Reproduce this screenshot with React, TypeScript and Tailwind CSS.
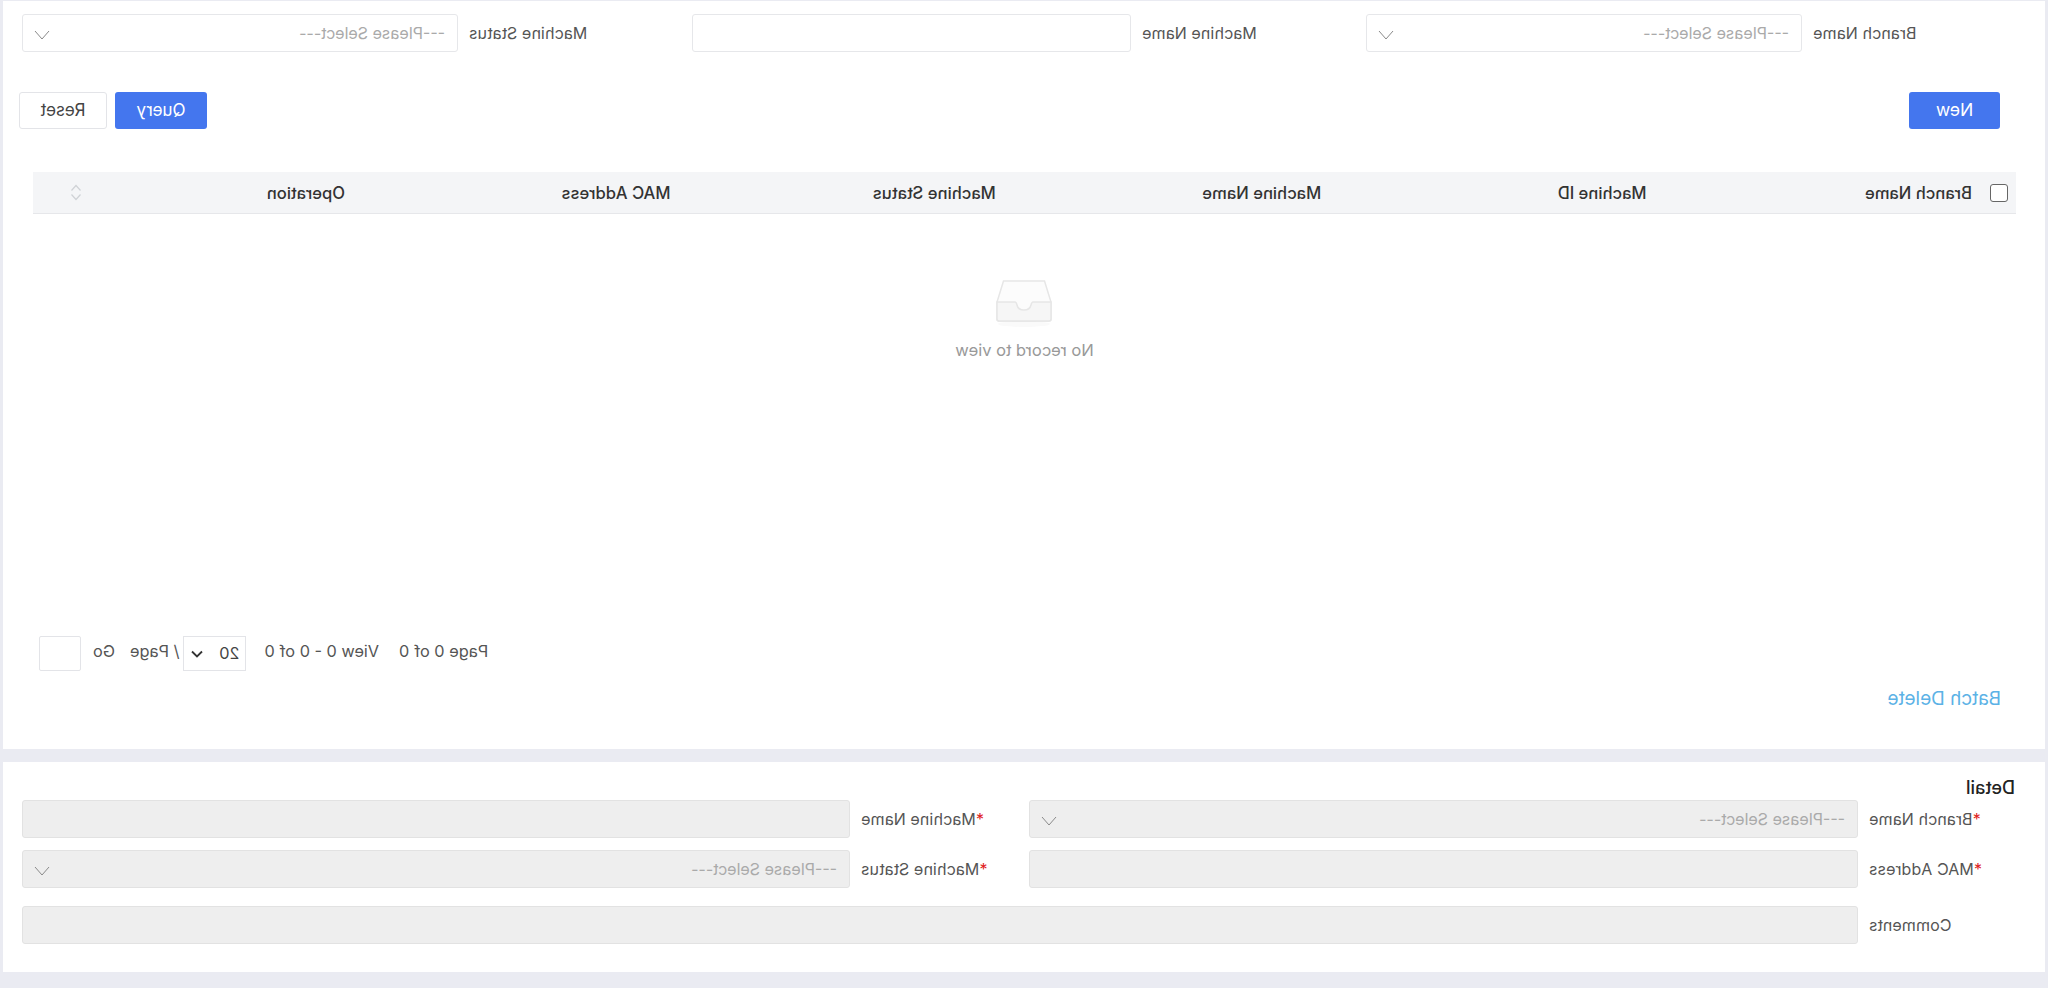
import type { ReactNode } from "react"

function Chevron() {
    return (
        <svg width="16" height="10" viewBox="0 0 16 10" fill="none" className="shrink-0 mt-[3px]">
            <path d="M1 1l7 8 7-8" stroke="#8a8a8a" strokeWidth="1" />
        </svg>
    )
}

function SelectBox({ disabled }: { disabled?: boolean }) {
    return (
        <div className={`h-[38px] flex items-center justify-between pl-3 pr-[11px] rounded-[3px] border text-[16px] text-[#aaaaaa] ${disabled ? "bg-[#eeeeee] border-[#e2e2e2]" : "bg-white border-[#e6e7ea]"}`}>
            <span>---Please Select---</span>
            <Chevron />
        </div>
    )
}

function FilterLabel({ children }: { children: ReactNode }) {
    return <label className="text-right pr-[11px] text-[16px] tracking-[0.1px] text-[#555555]">{children}</label>
}

function DetailLabel({ children, required }: { children: ReactNode; required?: boolean }) {
    return (
        <label className="text-right pr-[11px] text-[16px] tracking-[0.1px] text-[#555555]">
            {required && <span className="text-[#e02020]">*</span>}
            {children}
        </label>
    )
}

function DisabledInput() {
    return <div className="h-[38px] rounded-[3px] border border-[#e2e2e2] bg-[#eeeeee]" />
}

function EmptyIcon() {
    return (
        <svg width="56" height="48" viewBox="0 0 56 48" fill="none">
            <ellipse cx="28" cy="44" rx="26" ry="3" fill="#fafafa" />
            <path d="M7.500 1h41L55 22v17a2 2 0 0 1-2 2H3a2 2 0 0 1-2-2V22z" fill="#fcfcfc" stroke="#e6e6e6" strokeWidth="1.500" />
            <path d="M1 22h18c1 0 1.500 1 2 3 .7 3 3 5 7 5s6.300-2 7-5c.5-2 1-3 2-3h18v17a2 2 0 0 1-2 2H3a2 2 0 0 1-2-2z" fill="#f6f6f6" stroke="#e6e6e6" strokeWidth="1.500" />
        </svg>
    )
}

const columns = ["Branch Name", "Machine ID", "Machine Name", "Machine Status", "MAC Address"]

export default function App() {
    return (
        <div className="-scale-x-100 w-[2048px] h-[988px] overflow-hidden bg-[#eaebf2] pl-[3px] pr-[3px] pt-px font-['Inter',sans-serif]">
            <div className="h-[748px] bg-white pt-[13px]">
                <div className="grid grid-cols-[243px_436px_235px_439px_234px_436px] items-center">
                    <FilterLabel>Branch Name</FilterLabel>
                    <SelectBox />
                    <FilterLabel>Machine Name</FilterLabel>
                    <div className="h-[38px] rounded-[3px] border border-[#e6e7ea] bg-white" />
                    <FilterLabel>Machine Status</FilterLabel>
                    <SelectBox />
                </div>

                <div className="mt-10 pl-[45px] pr-4 flex justify-between">
                    <button className="w-[91px] h-[37px] rounded-[3px] bg-[#4476ee] text-white text-[17.500px]">New</button>
                    <div className="flex gap-2">
                        <button className="w-[92px] h-[37px] rounded-[3px] bg-[#4476ee] text-white text-[17px]">Query</button>
                        <button className="w-[88px] h-[37px] rounded-[3px] border border-[#e3e4e8] bg-white text-[#444444] text-[17px]">Reset</button>
                    </div>
                </div>

                <div className="mt-[43px] ml-[29px] w-[1983px]">
                    <div className="h-[42px] flex items-center bg-[#f4f5f7] border-b border-[#e6e7ea] pl-2 text-[16.600px] font-medium text-[#333333]">
                        <span className="w-[18px] h-[18px] rounded-[3px] border-[1.5px] border-[#666666] bg-white mr-[18px] shrink-0" />
                        {columns.map((c) => (
                            <span key={c} className="w-[325.4px] shrink-0 pt-[2px]">{c}</span>
                        ))}
                        <span className="w-[263px] shrink-0 pt-[2px]">Operation</span>
                        <svg width="12" height="17" viewBox="0 0 12 17" fill="none" className="shrink-0">
                            <path d="M1.500 6.500L6 1.500l4.500 5M1.500 10.500l4.500 5 4.500-5" stroke="#cfd2d6" strokeWidth="1.200" />
                        </svg>
                    </div>
                    <div className="h-[422px] pt-[66px] flex flex-col items-center">
                        <EmptyIcon />
                        <p className="mt-[13px] text-[16.500px] leading-[18px] text-[#999999]">No record to view</p>
                    </div>
                </div>

                <div className="h-[35px] pr-[36px] flex justify-end items-center text-[16.300px] text-[#555555]">
                    <span className="pb-[5px]">Page 0 of 0</span>
                    <span className="ml-5 pb-[5px]">View 0 - 0 of 0</span>
                    <div className="ml-[18px] w-[63px] h-[35px] border border-[#e3e4e8] flex items-center justify-between pl-[6px] pr-[7px]">
                        <span className="text-[#444444]">20</span>
                        <svg width="12" height="8" viewBox="0 0 12 8" fill="none">
                            <path d="M1 1.500l5 5 5-5" stroke="#333333" strokeWidth="1.800" />
                        </svg>
                    </div>
                    <span className="ml-1 pb-[5px]">/ Page</span>
                    <span className="ml-[15px] pb-[5px]">Go</span>
                    <div className="ml-3 w-[42px] h-[35px] border border-[#e3e4e8] rounded-[2px]" />
                </div>

                <p className="mt-[19px] ml-[44px] text-[18.900px] leading-[18px] text-[#5cb2e6]">Batch Delete</p>
            </div>

            <div className="mt-[13px] h-[210px] bg-white pt-4">
                <h2 className="ml-[30px] text-[18px] leading-[20px] font-medium text-[#222222]">Detail</h2>
                <div className="mt-[2px] grid grid-cols-[187px_829px_179px_828px] items-center gap-y-3">
                    <DetailLabel required>Branch Name</DetailLabel>
                    <SelectBox disabled />
                    <DetailLabel required>Machine Name</DetailLabel>
                    <DisabledInput />
                    <DetailLabel required>MAC Address</DetailLabel>
                    <DisabledInput />
                    <DetailLabel required>Machine Status</DetailLabel>
                    <SelectBox disabled />
                </div>
                <div className="mt-[18px] grid grid-cols-[187px_1836px] items-center">
                    <DetailLabel>Comments</DetailLabel>
                    <DisabledInput />
                </div>
            </div>
        </div>
    )
}
